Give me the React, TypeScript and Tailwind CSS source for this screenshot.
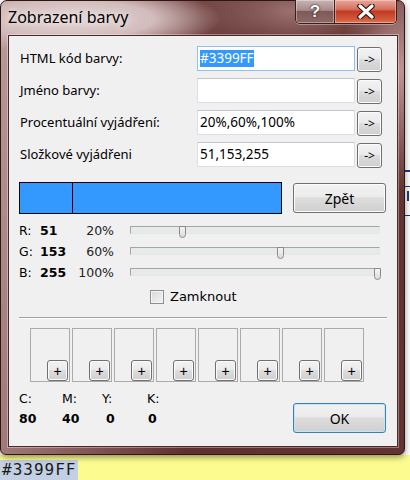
import { useState } from "react";

type Channel = { key: string; value: number; percent: number };

const channels: Channel[] = [
  { key: "R", value: 51, percent: 20 },
  { key: "G", value: 153, percent: 60 },
  { key: "B", value: 255, percent: 100 },
];

const rows = [
  { label: "HTML kód barvy:", value: "#3399FF", focused: true },
  { label: "Jméno barvy:", value: "", focused: false },
  { label: "Procentuální vyjádření:", value: "20%,60%,100%", focused: false },
  { label: "Složkové vyjádřeni", value: "51,153,255", focused: false },
];

const cmyk = [
  { label: "C:", value: "80", w: "w-[43px]", pad: "" },
  { label: "M:", value: "40", w: "w-[40px]", pad: "" },
  { label: "Y:", value: "0", w: "w-[45px]", pad: "pl-[4px]" },
  { label: "K:", value: "0", w: "w-[30px]", pad: "pl-[1px]" },
];

const btn =
  "border border-[#707070] rounded-[3px] bg-[linear-gradient(#f2f2f2,#ebebeb_45%,#dddddd_50%,#cfcfcf)] shadow-[inset_0_0_0_1px_#fcfcfc] text-black flex items-center justify-center";

function ArrowButton() {
  return <div className={`${btn} w-[25px] h-[25px] mt-[1px] text-[12px] leading-none`}>-&gt;</div>;
}

function Slider({ percent }: { percent: number }) {
  const center = 3.5 + (percent / 100) * 243.5;
  return (
    <div className="relative w-[250px] h-[8px] border border-[#a5a5a5] border-b-[#e6e6e6] border-r-[#e6e6e6] bg-[#e7eaea]">
      <div
        className="absolute top-[-1px] w-[7px] h-[12px] border border-[#8a8a8a] rounded-b-[4px] bg-[linear-gradient(#f4f4f4,#dcdcdc)]"
        style={{ left: center - 4 }}
      />
    </div>
  );
}

export default function App() {
  const [locked, setLocked] = useState(false);

  return (
    <div className="w-[410px] h-[480px] bg-white overflow-hidden flex flex-col font-['Noto_Sans',sans-serif]">
      <div className="flex h-[455px] shrink-0">
        {/* window frame */}
        <div className="relative z-10 w-[405px] h-[455px] rounded-t-[7px] rounded-b-[6px] border border-[#2e1614] shadow-[0_2px_6px_rgba(0,0,0,0.45)] bg-[radial-gradient(ellipse_150px_34px_at_70px_18px,#e4d6d6_0%,#d2bcbc_55%,rgba(200,170,170,0)_100%),radial-gradient(ellipse_60px_120px_at_400px_70px,rgba(200,160,158,0.9)_0%,rgba(200,160,158,0)_100%),radial-gradient(ellipse_90px_40px_at_290px_10px,rgba(170,130,128,0.8)_0%,rgba(170,130,128,0)_100%),linear-gradient(100deg,#b99c9b_0%,#8a5f5d_30%,#5e302e_55%,#613432_100%)] flex flex-col">
          {/* title bar */}
          <div className="h-[34px] flex items-start shrink-0">
            <div className="pl-[7px] pt-[5px] text-[16px] leading-[22px] text-black [text-shadow:0_0_8px_#f2e8e8,0_0_4px_#f2e8e8]">
              Zobrazení barvy
            </div>
            <div className="ml-auto mr-[7px] flex h-[24px] mt-[-1px] rounded-b-[5px] border border-[#3a1e1c] border-t-0 overflow-hidden shadow-[0_1px_0_rgba(255,255,255,0.35)]">
              <div className="w-[39px] h-full bg-[linear-gradient(#c8b4b3,#a88a88_45%,#7e5a58_50%,#8e6866)] border-r border-[#3a1e1c] flex items-center justify-center shadow-[inset_0_0_0_1px_rgba(255,255,255,0.35)]">
                <span className="font-['Liberation_Sans',sans-serif] font-bold text-[17px] leading-none text-white [text-shadow:0_0_2px_#2a1514,0_0_1px_#2a1514]">?</span>
              </div>
              <div className="w-[61px] h-full bg-[linear-gradient(#e8a89c,#d4705e_40%,#c23a22_50%,#d25a3c_85%,#e07a58)] flex items-center justify-center shadow-[inset_0_0_0_1px_rgba(255,220,210,0.45)]">
                <svg width="18" height="15" viewBox="0 0 18 15">
                  <path d="M3 2 L15 13 M15 2 L3 13" stroke="#3a1510" strokeWidth="5.5" strokeLinecap="round" />
                  <path d="M3 2 L15 13 M15 2 L3 13" stroke="#ffffff" strokeWidth="3.2" strokeLinecap="round" />
                </svg>
              </div>
            </div>
          </div>

          {/* client area */}
          <div className="ml-[7px] w-[390px] h-[412px] bg-[#f0f0f0] border border-[#4a2a28] shadow-[0_0_0_1px_rgba(255,255,255,0.35)] flex flex-col text-[13px] text-black">
            <div className="mt-[10px] flex flex-col gap-[6px]">
              {rows.map((r) => (
                <div key={r.label} className="h-[26px] flex items-start">
                  <div className="w-[188px] pl-[11px] h-[25px] flex items-center">{r.label}</div>
                  <div
                    className={`w-[158px] h-[25px] bg-white border flex items-center pl-[2px] text-[13.5px] ${
                      r.focused ? "border-[#8ec1ee]" : "border-[#dcdfe5] border-t-[#c3c6cc]"
                    }`}
                  >
                    {r.focused ? (
                      <span className="bg-[#3399ff] text-white leading-[17px]">{r.value}</span>
                    ) : (
                      <span>{r.value}</span>
                    )}
                  </div>
                  <div className="ml-[2px]">
                    <ArrowButton />
                  </div>
                </div>
              ))}
            </div>

            {/* colour preview */}
            <div className="mt-[14px] flex items-start pl-[10px]">
              <div className="w-[263px] h-[32px] bg-[#3399ff] border border-black flex">
                <div className="w-[53px] h-full border-r border-black" />
              </div>
              <div className={`${btn} ml-[11px] mt-[1px] w-[93px] h-[30px] text-[14px]`}>Zpět</div>
            </div>

            {/* channels */}
            <div className="mt-[7px] flex flex-col pl-[10px]">
              {channels.map((c) => (
                <div key={c.key} className="h-[21px] flex items-center font-['DejaVu_Sans',sans-serif] text-[12.5px]">
                  <span className="w-[21px]">{c.key}:</span>
                  <span className="w-[34px] font-bold">{c.value}</span>
                  <span className="w-[40px] text-right text-[#222]">{c.percent}%</span>
                  <div className="ml-[16px] mt-[-3px]">
                    <Slider percent={c.percent} />
                  </div>
                </div>
              ))}
            </div>

            <label className="mt-[5px] h-[16px] flex items-center pl-[141px] cursor-pointer">
              <input
                type="checkbox"
                checked={locked}
                onChange={(e) => setLocked(e.target.checked)}
                className="appearance-none w-[14px] h-[14px] border border-[#8f8f8f] bg-[linear-gradient(135deg,#d8d8d8,#f4f4f4)] shadow-[inset_0_0_0_1px_#f4f4f4]"
              />
              <span className="ml-[6px] font-['DejaVu_Sans',sans-serif] text-[13px]">Zamknout</span>
            </label>

            <div className="mt-[12px] mx-[10px] h-[2px] border-t border-[#a0a0a0] border-b border-b-white" />

            {/* stored colours */}
            <div className="mt-[9px] pl-[21px] flex gap-[2px]">
              {Array.from({ length: 8 }).map((_, i) => (
                <div key={i} className="w-[40px] h-[54px] border border-[#ababab] flex items-end justify-end pr-[1px]">
                  <div className={`${btn} w-[21px] h-[21px] text-[14px] leading-none font-['Liberation_Sans',sans-serif]`}>+</div>
                </div>
              ))}
            </div>

            {/* CMYK + OK */}
            <div className="mt-[9px] flex items-start">
              <div className="pl-[10px] flex font-['DejaVu_Sans',sans-serif] text-[12.5px]">
                {cmyk.map((c) => (
                  <div key={c.label} className={`${c.w} flex flex-col gap-[4px]`}>
                    <span className="leading-[16px]">{c.label}</span>
                    <span className={`leading-[16px] font-bold ${c.pad}`}>{c.value}</span>
                  </div>
                ))}
              </div>
              <div className="ml-auto mr-[11px] mt-[12px] w-[93px] h-[30px] rounded-[3px] border border-[#3c7fb1] shadow-[inset_0_0_0_1px_#c4e5f6] bg-[linear-gradient(#f2f2f2,#ebebeb_45%,#dddddd_50%,#cfcfcf)] flex items-center justify-center text-[14px]">
                OK
              </div>
            </div>
          </div>
        </div>

        {/* page behind the dialog */}
        <div className="flex-1 flex flex-col pt-[170px] gap-[4px]">
          <div className="h-[2px] bg-[#1b3b8a]" />
          <div className="h-[1px] bg-[#1b3b8a] mt-[10px]" />
          <div className="h-[10px] w-[2px] bg-[#1b3b8a] ml-[2px]" />
          <div className="h-[1px] bg-[#1b3b8a] mt-[10px]" />
        </div>
      </div>

      <div className="h-[25px] shrink-0 bg-[#fbfb8f] flex items-end">
        <div className="h-[20px] bg-[#c3cfe2] px-[2px] font-['DejaVu_Sans_Mono',monospace] text-[16px] tracking-[1px] leading-[20px] text-[#1a1a1a]">
          #3399FF
        </div>
      </div>
    </div>
  );
}
